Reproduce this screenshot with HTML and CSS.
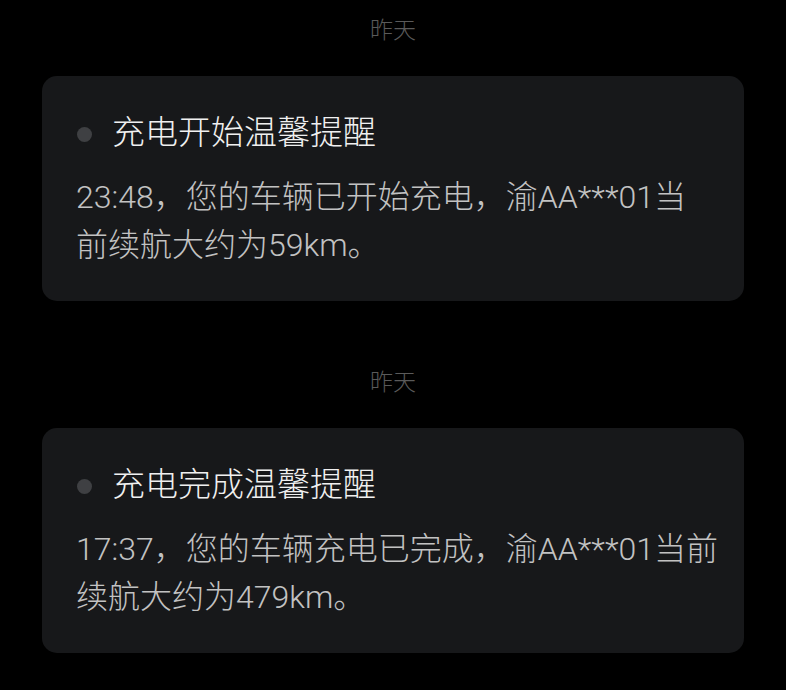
FILE: index.html
```html
<!DOCTYPE html>
<html lang="zh-CN">
<head>
    <meta charset="UTF-8">
    <meta name="viewport" content="width=device-width, initial-scale=1.0">
    <title>消息通知</title>
    <link rel="stylesheet" href="styles.css">
</head>
<body>
    <!-- Message list -->
    <main class="msg-list">
        <section class="msg-group">
            <div class="msg-date">昨天</div>
            <div class="msg-card">
                <div class="msg-title">
                    <span class="msg-dot"></span>
                    <span>充电开始温馨提醒</span>
                </div>
                <p class="msg-body">23:48，您的车辆已开始充电，渝AA***01当<br>前续航大约为59km。</p>
            </div>
        </section>

        <section class="msg-group">
            <div class="msg-date">昨天</div>
            <div class="msg-card">
                <div class="msg-title">
                    <span class="msg-dot"></span>
                    <span>充电完成温馨提醒</span>
                </div>
                <p class="msg-body">17:37，您的车辆充电已完成，渝AA***01当前续航大约为479km。</p>
            </div>
        </section>
    </main>
</body>
</html>
```

FILE: styles.css
```css
* {
    margin: 0;
    padding: 0;
    box-sizing: border-box;
}

body {
    font-family: Roboto, "Liberation Sans", "Noto Sans CJK SC", sans-serif;
    background: #000;
    color: #fff;
    height: 100vh;
    overflow: hidden;
}

.msg-list {
    display: flex;
    flex-direction: column;
    gap: 67px;
    padding: 16px 42px 0 42px;
}

.msg-group {
    display: flex;
    flex-direction: column;
    gap: 30px;
}

.msg-date {
    text-align: center;
    font-size: 23px;
    line-height: 30px;
    font-weight: 300;
    color: #5a5a5a;
}

.msg-card {
    background: #17181a;
    border-radius: 15px;
    padding: 37px 20px 32px 34px;
    height: 225px;
}

.msg-title {
    display: flex;
    align-items: center;
    gap: 20px;
    font-size: 33px;
    line-height: 40px;
    font-weight: 300;
    color: #f0f0f0;
}

.msg-dot {
    width: 15px;
    height: 15px;
    border-radius: 50%;
    background: #3f4043;
    margin-left: 1px;
    margin-top: 3px;
}

.msg-body {
    margin-top: 20px;
    font-size: 32px;
    line-height: 48px;
    font-weight: 300;
    color: #c2c2c2;
}
```
